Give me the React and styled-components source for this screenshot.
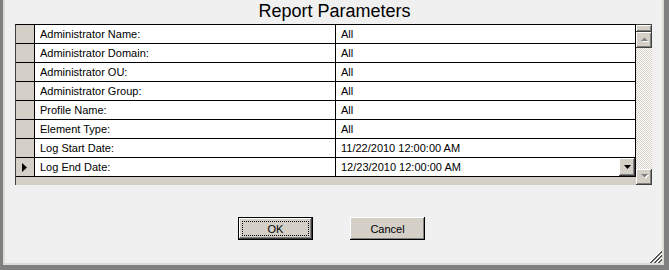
import React from "react";
import styled, { createGlobalStyle } from "styled-components";

const GlobalStyle = createGlobalStyle`
  html, body {
    margin: 0;
    padding: 0;
    background: #808080;
  }
  * {
    box-sizing: border-box;
  }
`;

const params = [
  { label: "Administrator Name:", value: "All" },
  { label: "Administrator Domain:", value: "All" },
  { label: "Administrator OU:", value: "All" },
  { label: "Administrator Group:", value: "All" },
  { label: "Profile Name:", value: "All" },
  { label: "Element Type:", value: "All" },
  { label: "Log Start Date:", value: "11/22/2010 12:00:00 AM" },
  { label: "Log End Date:", value: "12/23/2010 12:00:00 AM", current: true },
];

const ArrowDown = ({ color = "#000" }) => (
  <svg width="7" height="4" viewBox="0 0 7 4">
    <path d="M0 0H7L3.5 4Z" fill={color} />
  </svg>
);

const DisabledArrow = ({ up }) => (
  <svg width="9" height="6" viewBox="0 0 9 6">
    {up ? (
      <>
        <path d="M2 5H9L5.5 1.5Z" fill="#fff" />
        <path d="M1 4H8L4.5 0.5Z" fill="#808080" />
      </>
    ) : (
      <>
        <path d="M2 1H9L5.5 4.5Z" fill="#fff" />
        <path d="M1 0H8L4.5 3.5Z" fill="#808080" />
      </>
    )}
  </svg>
);

const App = () => {
  return (
    <>
      <GlobalStyle />
      <Window>
        <Frame>
          <Title>Report Parameters</Title>
          <Grid>
            <Table>
              {params.map((p) => (
                <Row key={p.label}>
                  <RowHeader>
                    {p.current && (
                      <svg width="5" height="9" viewBox="0 0 5 9">
                        <path d="M0 0L5 4.5L0 9Z" fill="#000" />
                      </svg>
                    )}
                  </RowHeader>
                  <Cell>{p.label}</Cell>
                  <Cell $last>
                    <span>{p.value}</span>
                    {p.current && (
                      <DropButton>
                        <ArrowDown />
                      </DropButton>
                    )}
                  </Cell>
                </Row>
              ))}
            </Table>
            <ScrollBar>
              <Splitter />
              <ScrollButton>
                <DisabledArrow up />
              </ScrollButton>
              <Track />
              <ScrollButton>
                <DisabledArrow />
              </ScrollButton>
            </ScrollBar>
          </Grid>
          <Buttons>
            <Button $default>OK</Button>
            <Button>Cancel</Button>
          </Buttons>
          <Grip>
            <svg width="12" height="12" viewBox="0 0 12 12">
              <path d="M11 0L0 11M11 4L4 11M11 8L8 11" stroke="#fff" strokeWidth="1" />
              <path d="M12 0L0 12M12 1L1 12M12 4L4 12M12 5L5 12M12 8L8 12M12 9L9 12" stroke="#555" strokeWidth="1" />
            </svg>
          </Grip>
        </Frame>
      </Window>
    </>
  );
};

const Window = styled.div`
  width: 669px;
  height: 270px;
  border-left: 3px solid #808080;
  border-right: 5px solid #808080;
  border-bottom: 5px solid #808080;
  background: #808080;
`;

const Frame = styled.div`
  position: relative;
  height: 100%;
  background: #f0f0f0;
  border-left: 2px solid #dedbd6;
  border-right: 2px solid #dedbd6;
  border-bottom: 2px solid #dedbd6;
  font-family: "Liberation Sans", Arial, sans-serif;
  color: #000;
`;

const Title = styled.div`
  height: 24px;
  line-height: 22px;
  font-size: 18px;
  text-align: center;
  padding-left: 2px;
`;

const Grid = styled.div`
  display: flex;
  margin-left: 10px;
  width: 637px;
  height: 161px;
`;

const Table = styled.div`
  width: 621px;
  height: 161px;
  background: #d4d0c8;
  border-left: 1px solid #404040;
  border-top: 1px solid #000;
`;

const Row = styled.div`
  display: grid;
  grid-template-columns: 18px 301px 301px;
  height: 19px;
  border-bottom: 1px solid #000;
`;

const RowHeader = styled.div`
  background: #d4d0c8;
  display: flex;
  align-items: center;
  justify-content: center;
  padding-right: 1px;
`;

const Cell = styled.div`
  display: flex;
  align-items: center;
  justify-content: space-between;
  background: #fff;
  border-left: 1px solid #000;
  border-right: ${(p) => (p.$last ? "1px solid #000" : "none")};
  padding-left: 5px;
  font-size: 11px;
  line-height: 18px;
  white-space: nowrap;
  overflow: hidden;
`;

const DropButton = styled.div`
  width: 16px;
  height: 18px;
  flex-shrink: 0;
  background: #d4d0c8;
  display: flex;
  align-items: center;
  justify-content: center;
  box-shadow: inset -1px -1px #404040, inset 1px 1px #fff, inset -2px -2px #808080;
`;

const ScrollBar = styled.div`
  width: 16px;
  display: flex;
  flex-direction: column;
`;

const Splitter = styled.div`
  height: 8px;
  background: #d4d0c8;
  border-top: 1px solid #404040;
  box-shadow: inset -1px -1px #404040, inset 1px 1px #fff, inset -2px -2px #808080;
`;

const ScrollButton = styled.div`
  height: 16px;
  background: #d4d0c8;
  display: flex;
  align-items: center;
  justify-content: center;
  box-shadow: inset -1px -1px #404040, inset 1px 1px #fff, inset -2px -2px #808080;
`;

const Track = styled.div`
  flex: 1;
  background: repeating-conic-gradient(#fff 0 25%, #d4d0c8 0 50%) 0 0 / 2px 2px;
`;

const Buttons = styled.div`
  display: flex;
  justify-content: center;
  gap: 37px;
  margin-top: 32px;
  padding-right: 4px;
`;

const Button = styled.div`
  width: 75px;
  height: 23px;
  background: #d4d0c8;
  font-size: 11px;
  display: flex;
  align-items: center;
  justify-content: center;
  border: ${(p) => (p.$default ? "1px solid #000" : "none")};
  box-shadow: ${(p) =>
    p.$default
      ? "inset -1px -1px #404040, inset 1px 1px #fff, inset -2px -2px #808080"
      : "inset -1px -1px #000, inset 1px 1px #fff, inset -2px -2px #808080"};
  outline: ${(p) => (p.$default ? "1px dotted #000" : "none")};
  outline-offset: -5px;
`;

const Grip = styled.div`
  position: absolute;
  right: 0;
  bottom: 0;
  width: 12px;
  height: 12px;
  display: flex;
`;

export default App;
